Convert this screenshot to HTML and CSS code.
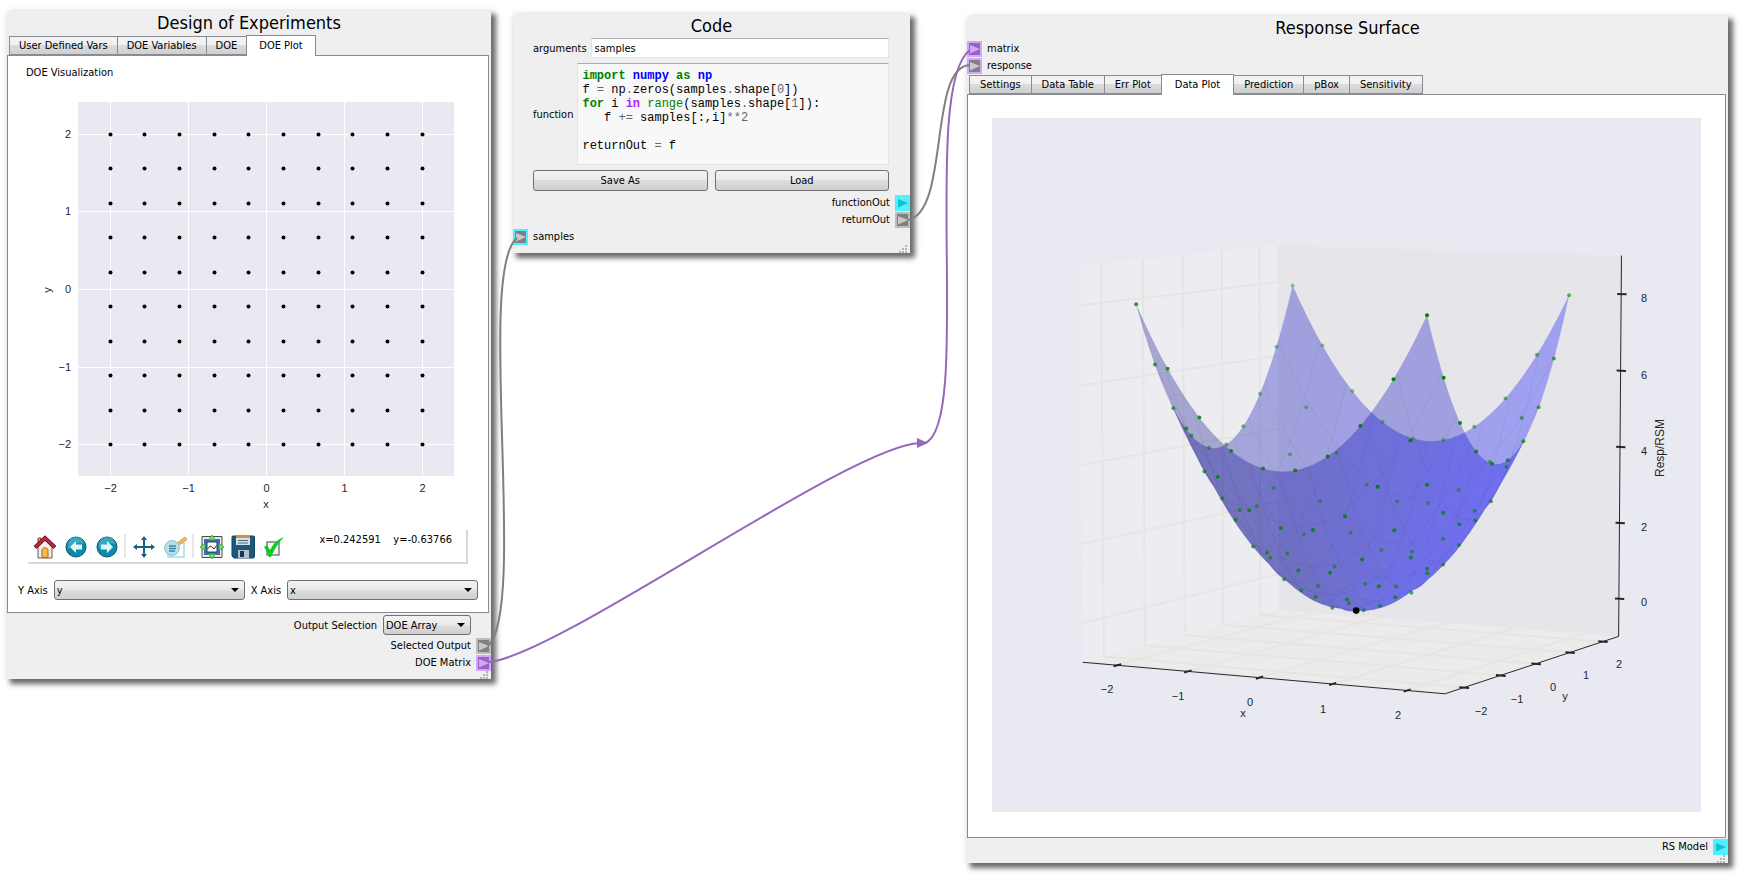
FILE: index.html
```
<!DOCTYPE html>
<html lang="en">
<head>
  <meta charset="UTF-8">
  <meta name="viewport" content="width=device-width, initial-scale=1.0">
  <title>Response Surface Flowchart</title>
  <link rel="stylesheet" href="styles.css">
</head>
<body>
  <svg class="defs" width="0" height="0" aria-hidden="true">
    <symbol id="port" viewBox="0 0 15 16">
      <rect class="port-frame" width="15" height="16"/>
      <rect class="port-body" x="2" y="2" width="11" height="12"/>
      <path class="port-arrow" d="M3 4L13 8L3 12.500Z"/>
    </symbol>
    <symbol id="grip" viewBox="0 0 9 8">
      <path fill="#b4b4b4" d="M6 0h2v2h-2zM3 3h2v2h-2zM6 3h2v2h-2zM0 6h2v2h-2zM3 6h2v2h-2zM6 6h2v2h-2z"/>
    </symbol>
  </svg>

  <main class="canvas">
    <section class="node node-doe">
      <h2>Design of Experiments</h2>
      <div class="tabs" role="tablist">
        <button class="tab" role="tab">User Defined Vars</button>
        <button class="tab" role="tab">DOE Variables</button>
        <button class="tab" role="tab">DOE</button>
        <button class="tab active" role="tab" aria-selected="true">DOE Plot</button>
      </div>
      <div class="pane">
        <p class="caption">DOE Visualization</p>
        <svg class="plot" id="doePlot" viewBox="8 86 480 440"></svg>

        <div class="toolbar">
          <button class="tool" aria-label="Home">
            <svg width="24" height="24" viewBox="0 0 24 24">
              <path d="M5 3h3v6H5z" fill="#f5b169" stroke="#8a3a2a"/>
              <path d="M5 12L12 5L19 12V23H5Z" fill="#f4eee4" stroke="#6b5a50"/>
              <path d="M9 22.500V14.500Q12 11 15 14.500V22.500Z" fill="#fdb64e" stroke="#a5672a"/>
              <path d="M2 12.500L12 3L22 12.500" fill="none" stroke="#6d1426" stroke-width="4"/>
              <path d="M2.500 12L12 3L21.500 12" fill="none" stroke="#c22b45" stroke-width="2"/>
            </svg>
          </button>
          <button class="tool" aria-label="Back">
            <svg width="24" height="24" viewBox="0 0 24 24">
              <circle cx="12" cy="12" r="10" fill="#0e8ba8" stroke="#0a5873"/>
              <path d="M4 9A8 7 0 0 1 20 9Q12 6 4 14Z" fill="#4fbfce" opacity=".6"/>
              <path d="M6 12L12 6V9.500H18V14.500H12V18Z" fill="#e2f6f8"/>
            </svg>
          </button>
          <button class="tool" aria-label="Forward">
            <svg width="24" height="24" viewBox="0 0 24 24">
              <circle cx="12" cy="12" r="10" fill="#0e8ba8" stroke="#0a5873"/>
              <path d="M4 9A8 7 0 0 1 20 9Q12 6 4 14Z" fill="#4fbfce" opacity=".6"/>
              <path d="M18 12L12 6V9.500H6V14.500H12V18Z" fill="#e2f6f8"/>
            </svg>
          </button>
          <span class="tool-sep"></span>
          <button class="tool" aria-label="Pan">
            <svg width="24" height="24" viewBox="0 0 24 24">
              <path d="M12 3V21M3 12H21" stroke="#14627f" stroke-width="2"/>
              <path d="M12 1L15 5H9ZM12 23L15 19H9ZM1 12L5 9V15ZM23 12L19 9V15Z" fill="#14627f"/>
            </svg>
          </button>
          <button class="tool" aria-label="Zoom">
            <svg width="24" height="24" viewBox="0 0 24 24">
              <path d="M5 8H21V22H5Z" fill="#fff" stroke="#a5dbe5" stroke-width="1.500"/>
              <path d="M14 8L22 2L24 4.500L16 10Z" fill="#f6b45c" stroke="#dd913c" stroke-width=".8"/>
              <circle cx="9" cy="13" r="7.500" fill="#b9dfe8" stroke="#94c3d0"/>
              <path d="M6 11H13M6 13.500H13M6 16H12" stroke="#2d89a5" stroke-width="1.300"/>
            </svg>
          </button>
          <span class="tool-sep"></span>
          <button class="tool" aria-label="Subplots">
            <svg width="24" height="24" viewBox="0 0 24 24">
              <path d="M2 1.500H22V22.500H2Z" fill="#e9e9e9" stroke="#4b4b4b"/>
              <path d="M4 4H20V20H4Z" fill="#4468b5"/>
              <path d="M7 7H17V17H7Z" fill="#fff" stroke="#27406f"/>
              <path d="M7.500 14L10 11L12 12L14 14L16.500 10.500" fill="none" stroke="#333"/>
              <path d="M12 0L15.500 5H8.500ZM12 24L15.500 19H8.500ZM0 12L5 8.500V15.500ZM24 12L19 8.500V15.500Z" fill="#68e668" stroke="#2fa33a" stroke-width=".8"/>
            </svg>
          </button>
          <button class="tool" aria-label="Save figure">
            <svg width="24" height="24" viewBox="0 0 24 24">
              <path d="M1 2Q1 1 2 1H22Q23.500 1 23.500 2V21Q23.500 23 22 23H3L1 21Z" fill="#1b587a" stroke="#0d4260"/>
              <path d="M5 1H19V10H5Z" fill="#d4e3ea"/>
              <path d="M5 1H19V3H5Z" fill="#dd8a3a"/>
              <path d="M7 5.500H17M7 8H17" stroke="#44697d"/>
              <path d="M7 15H18V23H7Z" fill="#b8bfc8"/>
              <path d="M9 16H13V22H9Z" fill="#123a55"/>
            </svg>
          </button>
          <button class="tool" aria-label="Edit parameters">
            <svg width="24" height="24" viewBox="0 0 24 24">
              <path d="M5 7H17V20H5Z" fill="#f5f5f5" stroke="#7f7f7f" stroke-width="1.500"/>
              <path d="M2 12L5 10L8 15Q13 5 22 2Q14 10 9 22H7Q5 16 2 12Z" fill="#0ccc1c"/>
            </svg>
          </button>
          <output class="coords">x=0.242591 &nbsp;&nbsp; y=-0.63766</output>
        </div>

        <div class="axes">
          <label for="yAxis">Y Axis</label>
          <select id="yAxis"><option>y</option><option>x</option></select>
          <label for="xAxis">X Axis</label>
          <select id="xAxis"><option>x</option><option>y</option></select>
        </div>
      </div>
      <div class="output-row">
        <label for="outputSel">Output Selection</label>
        <select id="outputSel"><option>DOE Array</option></select>
      </div>
      <div class="io out">Selected Output <svg class="port gray"><use href="#port"/></svg></div>
      <div class="io out">DOE Matrix <svg class="port purple"><use href="#port"/></svg></div>
      <svg class="grip"><use href="#grip"/></svg>
    </section>

    <section class="node node-code">
      <h2>Code</h2>
      <div class="form">
        <div class="field">
          <label for="args">arguments</label>
          <input id="args" type="text" value="samples">
        </div>
        <div class="field">
          <span id="fnLabel" class="fn-label">function</span>
          <div class="editor" contenteditable="true" spellcheck="false" role="textbox" aria-multiline="true" aria-labelledby="fnLabel">
            <div class="line"><b class="kw">import</b> <b class="mod">numpy</b> <b class="kw">as</b> <b class="mod">np</b></div>
            <div class="line">f <i>=</i> np<i>.</i>zeros(samples<i>.</i>shape[<i>0</i>])</div>
            <div class="line"><b class="kw">for</b> i <b class="op">in</b> <span class="kw">range</span>(samples<i>.</i>shape[<i>1</i>]):</div>
            <div class="line">   f <i>+=</i> samples[:,i]<i>**2</i></div>
            <div class="line"></div>
            <div class="line">returnOut <i>=</i> f</div>
          </div>
        </div>
        <div class="buttons">
          <button class="push">Save As</button>
          <button class="push">Load</button>
        </div>
      </div>
      <div class="io out">functionOut <svg class="port open"><use href="#port"/></svg></div>
      <div class="io out">returnOut <svg class="port gray"><use href="#port"/></svg></div>
      <div class="io in"><svg class="port cyan"><use href="#port"/></svg> samples</div>
      <svg class="grip"><use href="#grip"/></svg>
    </section>

    <section class="node node-rs">
      <h2>Response Surface</h2>
      <div class="io in"><svg class="port purple"><use href="#port"/></svg> matrix</div>
      <div class="io in"><svg class="port mixed"><use href="#port"/></svg> response</div>
      <div class="tabs" role="tablist">
        <button class="tab" role="tab">Settings</button>
        <button class="tab" role="tab">Data Table</button>
        <button class="tab" role="tab">Err Plot</button>
        <button class="tab active" role="tab" aria-selected="true">Data Plot</button>
        <button class="tab" role="tab">Prediction</button>
        <button class="tab" role="tab">pBox</button>
        <button class="tab" role="tab">Sensitivity</button>
      </div>
      <div class="pane">
        <svg class="plot surface" id="rsPlot" viewBox="992 118 709 694"></svg>
      </div>
      <div class="io out">RS Model <svg class="port open"><use href="#port"/></svg></div>
      <svg class="grip"><use href="#grip"/></svg>
    </section>

    <svg class="wires">
      <path class="wire" d="M488 646C528 610 476 270 517 238"/>
      <path class="wire purple" d="M489 662C560 655 850 445 920 443"/>
      <path class="wire purple" d="M925 443C973 425 920 85 970 50"/>
      <path class="wire" d="M908 220C950 212 928 66 970 65"/>
      <path class="knot" d="M917 438L928 443L917 448Z"/>
    </svg>
  </main>

  <script src="plots.js"></script>
</body>
</html>
```
FILE: plots.js
```
const NS = 'http://www.w3.org/2000/svg';
const TICKS = [-2, -1, 0, 1, 2];

function add(parent, tag, attrs, text) {
  const el = document.createElementNS(NS, tag);
  for (const k in attrs) el.setAttribute(k, attrs[k]);
  if (text !== undefined) el.textContent = text;
  parent.appendChild(el);
}

function fmt(v) {
  return String(v).replace('-', '\u2212');
}

const samples = [];
for (let i = 0; i < 10; i++) {
  for (let j = 0; j < 10; j++) samples.push([-2 + 4 * i / 9, -2 + 4 * j / 9]);
}

function drawDoe() {
  const svg = document.getElementById('doePlot');
  const sx = v => 266.5 + 78 * v;
  const sy = v => 290 - 77.7 * v;
  add(svg, 'rect', { x: 78, y: 102, width: 376, height: 374, class: 'axes-bg' });
  TICKS.forEach(t => {
    const x = Math.round(sx(t)) - 0.5, y = Math.round(sy(t)) - 0.5;
    add(svg, 'path', { d: `M${x} 102V476M78 ${y}H454`, class: 'grid' });
    add(svg, 'text', { x: x, y: 492, class: 'tick mid' }, fmt(t));
    add(svg, 'text', { x: 71, y: y + 3, class: 'tick end' }, fmt(t));
  });
  samples.forEach(([x, y]) => {
    add(svg, 'circle', { cx: Math.round(sx(x)) - 0.5, cy: Math.round(sy(y)) - 0.5, r: 2 });
  });
  add(svg, 'text', { x: 266, y: 508, class: 'tick mid' }, 'x');
  add(svg, 'text', { x: 48, y: 293, class: 'tick mid', transform: 'rotate(-90 48 290)' }, 'y');
}

// camera: azimuth -62.2, elevation 6.3, ten box lengths away
const AZ = -62.2 * Math.PI / 180, EL = 6.3 * Math.PI / 180;

// box coordinates, each 0..1
function box(a, b, c) {
  const x = a - 0.5, y = b - 0.5, z = c - 0.5;
  const right = -Math.sin(AZ) * x + Math.cos(AZ) * y;
  const toward = Math.cos(AZ) * x + Math.sin(AZ) * y;
  const d = 1 - (Math.cos(EL) * toward + Math.sin(EL) * z) / 10;
  const up = Math.cos(EL) * z - Math.sin(EL) * toward;
  return [1356.2 + 398.7 * right / d, 455.8 - 391 * up / d, d];
}

const norm = v => (v + 2.5) / 5;
const normZ = v => (v + 1) / 10;
const project = (x, y) => box(norm(x), norm(y), normZ(x * x + y * y));
const path = pts => 'M' + pts.map(p => p[0].toFixed(2) + ' ' + p[1].toFixed(2)).join('L');

function drawPatches(svg) {
  const N = 10, S = 10, step = 4 / N;
  const patches = [];
  for (let i = 0; i < N; i++) {
    for (let j = 0; j < N; j++) {
      const x0 = -2 + i * step, y0 = -2 + j * step;
      const pts = [];
      for (let k = 0; k < S; k++) pts.push(project(x0 + step * k / S, y0));
      for (let k = 0; k < S; k++) pts.push(project(x0 + step, y0 + step * k / S));
      for (let k = 0; k < S; k++) pts.push(project(x0 + step - step * k / S, y0 + step));
      for (let k = 0; k < S; k++) pts.push(project(x0, y0 + step - step * k / S));
      const cx = x0 + step / 2, cy = y0 + step / 2;
      const light = (2 * cx + 2 * cy + 0.5) / Math.hypot(2 * cx, 2 * cy, 1) / 1.5;
      const blue = Math.round(191 + 64 * Math.max(-1, Math.min(1, light)));
      patches.push({ pts, blue, depth: project(cx, cy)[2] });
    }
  }
  patches.sort((a, b) => b.depth - a.depth);
  patches.forEach(p => {
    add(svg, 'path', { d: path(p.pts) + 'Z', fill: `rgb(0,0,${p.blue})`, class: 'patch' });
  });
}

function drawSurface() {
  const svg = document.getElementById('rsPlot');
  add(svg, 'rect', { x: 992, y: 118, width: 709, height: 694, class: 'axes-bg' });
  const face = (cls, ...c) => add(svg, 'path', { d: path(c.map(p => box(...p))) + 'Z', class: cls });
  const line = (cls, ...c) => add(svg, 'path', { d: path(c.map(p => box(...p))), class: cls });

  face('pane-left', [0, 0, 0], [0, 1, 0], [0, 1, 1], [0, 0, 1]);
  face('pane-back', [0, 1, 0], [1, 1, 0], [1, 1, 1], [0, 1, 1]);
  face('pane-floor', [0, 0, 0], [1, 0, 0], [1, 1, 0], [0, 1, 0]);
  TICKS.forEach(t => {
    const f = norm(t);
    line('grid3d', [f, 0, 0], [f, 1, 0], [f, 1, 1]);
    line('grid3d', [1, f, 0], [0, f, 0], [0, f, 1]);
  });
  [0, 2, 4, 6, 8].forEach(t => {
    const f = normZ(t);
    line('grid3d', [0, 0, f], [0, 1, f], [1, 1, f]);
  });

  line('axis', [0, 0, 0], [1, 0, 0], [1, 1, 0], [1, 1, 1]);
  TICKS.forEach(t => {
    const f = norm(t);
    line('tickmark', [f, -0.018, 0], [f, 0.018, 0]);
    line('tickmark', [0.988, f, 0], [1.014, f, 0]);
  });
  [0, 2, 4, 6, 8].forEach(t => line('tickmark', [0.989, 1, normZ(t)], [1.015, 1, normZ(t)]));

  drawPatches(svg);

  const pts = samples.map(([x, y]) => project(x, y)).sort((a, b) => b[2] - a[2]);
  pts.forEach(p => {
    const near = (1.055 - p[2]) / 0.11;
    add(svg, 'circle', { cx: p[0], cy: p[1], r: 2, class: 'sample', opacity: (0.35 + 0.65 * near).toFixed(2) });
  });
  const low = project(0, 0);
  add(svg, 'circle', { cx: low[0], cy: low[1], r: 3.3 });

  const labels = [
    [1107, 693, -2], [1178, 700, -1], [1250, 706, 0], [1323, 713, 1], [1398, 719, 2],
    [1481, 715, -2], [1517, 703, -1], [1553, 691, 0], [1586, 679, 1], [1619, 668, 2],
    [1644, 302, 8], [1644, 379, 6], [1644, 455, 4], [1644, 531, 2], [1644, 606, 0],
    [1243, 717, 'x'], [1565, 700, 'y']
  ];
  labels.forEach(([x, y, t]) => add(svg, 'text', { x, y, class: 'tick mid' }, fmt(t)));
  add(svg, 'text', { x: 1660, y: 452, class: 'axis-label mid', transform: 'rotate(-90 1660 448)' }, 'Resp/RSM');
}

drawDoe();
drawSurface();
```
FILE: styles.css
```
* {
  box-sizing: border-box;
}

body {
  margin: 0;
  background: #fff;
  color: #000;
  font-family: "DejaVu Sans Condensed", "Noto Sans", sans-serif;
  font-size: 11px;
}

button, input, select {
  font: inherit;
  color: inherit;
}

.defs {
  position: absolute;
}

.canvas {
  position: relative;
  min-height: 100vh;
  overflow: hidden;
}

/* nodes sit on a free canvas */
.node {
  position: absolute;
  background: #efefef;
  box-shadow: 4px 4px 5px 1px rgba(0, 0, 0, 0.55), 2px 2px 10px rgba(0, 0, 0, 0.12);
}

.node-doe {
  left: 7px;
  top: 11px;
  width: 484px;
}

.node-code {
  left: 513px;
  top: 14px;
  width: 397px;
}

.node-rs {
  left: 967px;
  right: 13px;
  top: 16px;
}

h2 {
  margin: 0;
  font-size: 18px;
  font-weight: normal;
  line-height: 24px;
  text-align: center;
}

/* tabs */
.tabs {
  display: flex;
  align-items: flex-end;
  padding-left: 2px;
  height: 20px;
}

.tab {
  height: 19px;
  padding: 0 9px;
  border: 1px solid #898c95;
  border-right-width: 0;
  background: linear-gradient(#f2f2f2 50%, #dcdcdc 50%, #cfcfcf);
  line-height: 16px;
  white-space: nowrap;
}

.tab:last-child {
  border-right-width: 1px;
}

.tab.active {
  height: 21px;
  padding: 0 12px;
  margin-bottom: -1px;
  border-width: 1px 1px 0;
  background: #fff;
  z-index: 1;
}

.tab.active + .tab {
  border-left-width: 0;
}

.pane {
  margin-right: 2px;
  background: #fff;
  border: 1px solid #898c95;
}

.caption {
  margin: 0;
  padding: 9px 18px 5px;
  line-height: 16px;
}

.plot {
  display: block;
  width: 100%;
}

/* matplotlib toolbar */
.toolbar {
  display: flex;
  align-items: center;
  height: 34px;
  margin: 4px 20px 0;
  padding-left: 1px;
  border-right: 2px solid #d9d9d9;
  border-bottom: 2px solid #d9d9d9;
}

.tool {
  width: 31px;
  height: 28px;
  padding: 2px 0 0;
  border: 0;
  background: none;
}

.tool svg {
  display: block;
  margin: 0 auto;
}

.tool-sep {
  width: 2px;
  height: 24px;
  margin: 0 2px;
  background: #e6e6e6;
}

.coords {
  margin: 0 14px 14px auto;
  white-space: nowrap;
}

select {
  appearance: none;
  height: 20px;
  padding: 0 22px 0 2px;
  border: 1px solid #707070;
  border-radius: 3px;
  background:
    url("data:image/svg+xml,%3Csvg xmlns='http://www.w3.org/2000/svg' width='8' height='4'%3E%3Cpath d='M0 0h8L4 4z'/%3E%3C/svg%3E") right 5px center no-repeat,
    linear-gradient(#f2f2f2, #ebebeb 45%, #dddddd 55%, #cfcfcf);
}

.axes {
  display: flex;
  align-items: center;
  gap: 6px;
  padding: 16px 10px 12px;
}

.axes select {
  flex: 1;
}

.output-row {
  display: flex;
  justify-content: flex-end;
  align-items: center;
  gap: 6px;
  padding: 2px 20px 2px 0;
}

.output-row select {
  width: 88px;
}

/* terminals */
.io {
  display: flex;
  align-items: center;
  gap: 5px;
  height: 17px;
}

.out {
  justify-content: flex-end;
}

.port {
  width: 15px;
  height: 16px;
  --frame: #bdbdbd;
  --body: #808080;
  --arrow: #c8c8c8;
}

.port-frame {
  fill: var(--frame);
}

.port-body {
  fill: var(--body);
}

.port-arrow {
  fill: var(--arrow);
}

.port.purple {
  --frame: #d3a5ff;
  --body: #9467bd;
  --arrow: #d3a5ff;
}

.port.mixed {
  --frame: #d3a5ff;
}

.port.cyan {
  --frame: #50f0ff;
}

.port.open {
  --frame: #50f0ff;
  --body: #50f0ff;
  --arrow: #17becf;
}

.grip {
  display: block;
  width: 9px;
  height: 8px;
  margin: 0 2px 0 auto;
}

/* code node */
.form {
  padding: 0 21px 3px 20px;
}

.field {
  display: flex;
  align-items: center;
  gap: 4px;
  margin-bottom: 5px;
}

input {
  flex: 1;
  min-width: 0;
  height: 20px;
  padding: 1px 3px;
  border: 1px solid #e2e3ea;
  border-top-color: #abadb3;
  background: #fff;
}

.editor {
  flex: 1;
  height: 102px;
  padding: 5px 4px;
  border: 1px solid #e2e3ea;
  border-top-color: #abadb3;
  background: #f8f8f8;
  font-family: "Liberation Mono", monospace;
  font-size: 12px;
}

.line {
  height: 14px;
  line-height: 14px;
  white-space: pre;
}

.editor i {
  color: #666;
  font-style: normal;
}

.kw {
  color: #008000;
}

.mod {
  color: #0000ff;
}

.op {
  color: #aa22ff;
}

.buttons {
  display: flex;
  gap: 7px;
}

.push {
  flex: 1;
  height: 21px;
  padding: 0;
  border: 1px solid #707070;
  border-radius: 3px;
  background: linear-gradient(#f2f2f2, #ebebeb 50%, #dddddd 50%, #cfcfcf);
}

.node-rs .tab {
  padding: 0 10px;
}

.node-rs .tab.active {
  padding: 0 13px;
}

.node-rs .pane {
  padding: 23px 24px 25px;
}

/* plots */
.plot text {
  font-family: "Liberation Sans", Arial, sans-serif;
  fill: #262626;
}

.tick {
  font-size: 11px;
}

.axis-label {
  font-size: 12px;
}

.mid {
  text-anchor: middle;
}

.end {
  text-anchor: end;
}

.axes-bg {
  fill: #e9e9f2;
}

.grid {
  stroke: #fff;
}

.pane-left {
  fill: #ededf1;
}

.pane-back {
  fill: #e6e6ea;
}

.pane-floor {
  fill: #ebebec;
}

.grid3d {
  fill: none;
  stroke: #e5e5e4;
  stroke-width: 2;
}

.axis {
  fill: none;
  stroke: #262626;
}

.tickmark {
  stroke: #262626;
  stroke-width: 2;
}

.patch {
  fill-opacity: 0.3;
  stroke: #000040;
  stroke-opacity: 0.04;
}

.sample {
  fill: #008000;
}

/* connections */
.wires {
  position: absolute;
  inset: 0;
  width: 100%;
  height: 100%;
  pointer-events: none;
}

.wire {
  fill: none;
  stroke: #7f7f7f;
  stroke-width: 2;
}

.wire.purple {
  stroke: #9467bd;
}

.knot {
  fill: #9467bd;
}
```
